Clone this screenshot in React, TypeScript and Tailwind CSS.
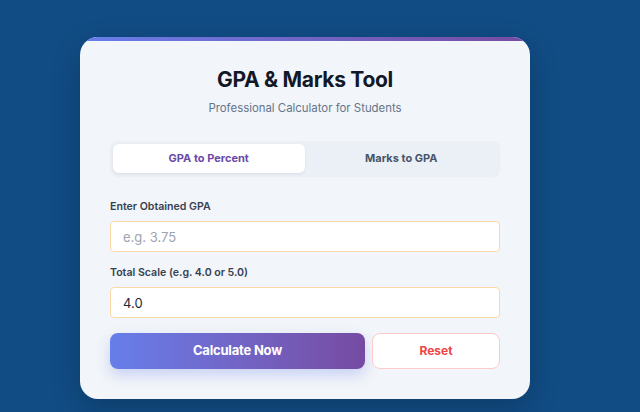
import { useState } from "react";

type Mode = "gpa" | "marks";

function Field({
  label,
  placeholder,
  value,
  onChange,
}: {
  label: string;
  placeholder?: string;
  value: string;
  onChange: (v: string) => void;
}) {
  return (
    <div className="flex flex-col">
      <label className="text-[10.6px] leading-4 font-semibold text-[#374151]">
        {label}
      </label>
      <input
        className="mt-[6px] h-[31px] w-full rounded-[4px] border border-[#fbd9a6] bg-white px-3 text-[13px] text-[#1f2937] outline-none placeholder:text-[#9ca3af]"
        onChange={(e) => onChange(e.target.value)}
        placeholder={placeholder}
        value={value}
      />
    </div>
  );
}

export default function App() {
  const [mode, setMode] = useState<Mode>("gpa");
  const [gpa, setGpa] = useState("");
  const [scale, setScale] = useState("4.0");

  return (
    <div
      className="min-h-[412px] w-full bg-[#114c84] pl-[80px] pt-[37px]"
      style={{ fontFamily: "Inter, 'Noto Sans', sans-serif" }}
    >
      <div className="w-[450px] overflow-hidden rounded-[18px] bg-[#f2f5f9] shadow-[0_10px_30px_rgba(0,0,0,0.2)]">
        <div className="h-[4px] bg-gradient-to-r from-[#667eea] to-[#764ba2]" />
        <div className="px-[30px] pb-[30px] pt-[25px]">
          <h1 className="text-center text-[21px] leading-7 font-bold tracking-[-0.3px] text-[#111827]">
            GPA &amp; Marks Tool
          </h1>
          <p className="mt-[6px] text-center text-[11.4px] leading-4 text-[#64748b]">
            Professional Calculator for Students
          </p>

          <div className="mt-[25px] flex h-[35px] gap-[1px] rounded-[8px] bg-[#ebf0f6] p-[3px] shadow-[0_1px_2px_rgba(0,0,0,0.04)]">
            <button
              className={`flex-1 rounded-[6px] text-[11px] font-bold ${
                mode === "gpa"
                  ? "bg-white text-[#6b4aa8] shadow-[0_1px_3px_rgba(0,0,0,0.08)]"
                  : "text-[#475569]"
              }`}
              onClick={() => setMode("gpa")}
              type="button"
            >
              GPA to Percent
            </button>
            <button
              className={`flex-1 rounded-[6px] text-[11px] font-bold ${
                mode === "marks"
                  ? "bg-white text-[#6b4aa8] shadow-[0_1px_3px_rgba(0,0,0,0.08)]"
                  : "text-[#475569]"
              }`}
              onClick={() => setMode("marks")}
              type="button"
            >
              Marks to GPA
            </button>
          </div>

          <div className="mt-[23px] flex flex-col gap-[13px]">
            <Field
              label="Enter Obtained GPA"
              onChange={setGpa}
              placeholder="e.g. 3.75"
              value={gpa}
            />
            <Field
              label="Total Scale (e.g. 4.0 or 5.0)"
              onChange={setScale}
              value={scale}
            />
          </div>

          <div className="mt-[15px] flex gap-[7px]">
            <button
              className="h-[36px] flex-1 rounded-[8px] bg-gradient-to-r from-[#667eea] to-[#764ba2] text-[13px] font-bold tracking-[-0.2px] text-white shadow-[0_6px_14px_rgba(102,126,234,0.3)]"
              type="button"
            >
              Calculate Now
            </button>
            <button
              className="h-[36px] w-[128px] rounded-[8px] border border-[#fecaca] bg-white text-[12px] font-bold text-[#ef4444]"
              onClick={() => {
                setGpa("");
                setScale("4.0");
              }}
              type="button"
            >
              Reset
            </button>
          </div>
        </div>
      </div>
    </div>
  );
}
